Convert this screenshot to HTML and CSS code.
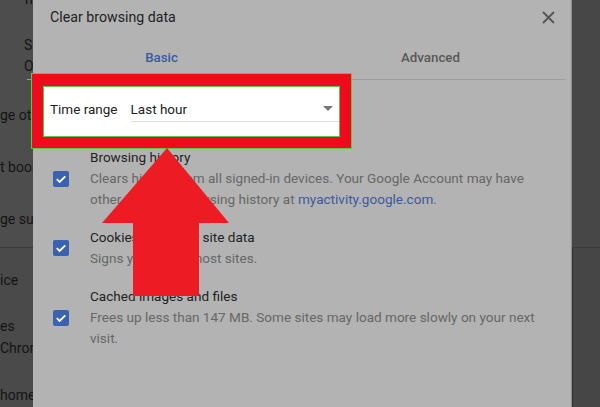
FILE: index.html
```html
<!DOCTYPE html>
<html lang="en">
<head>
<meta charset="utf-8">
<title>Clear browsing data</title>
<link rel="stylesheet" href="styles.css">
</head>
<body>
<div class="screen">
  <div class="bg-left">
    <div class="bg-top">
      <div class="bg-line l-n">n</div>
      <div class="bg-line l-s">S</div>
      <div class="bg-line l-o">O</div>
      <div class="bg-line l-ge">ge other people</div>
      <div class="bg-line l-tb">t bookmarks bar</div>
      <div class="bg-line l-gs">ge supervised users</div>
    </div>
    <div class="bg-bottom">
      <div class="bg-line l-ice">ice</div>
      <div class="bg-line l-es">es</div>
      <div class="bg-line l-chr">Chrome</div>
      <div class="bg-line l-home">home</div>
    </div>
  </div>

  <div class="dialog">
    <div class="dialog-header">
      <div class="dialog-title">Clear browsing data</div>
      <svg class="close" width="13" height="13" viewBox="0 0 13 13" aria-label="Close">
        <path d="M1 1 L12 12 M12 1 L1 12" stroke="#555" stroke-width="1.8" fill="none"/>
      </svg>
    </div>
    <div class="tabs">
      <div class="tab tab-active">Basic</div>
      <div class="tab">Advanced</div>
    </div>

    <div class="highlight">
      <div class="time-row">
        <span class="time-label">Time range</span>
        <div class="select">
          <span>Last hour</span>
          <svg class="caret" width="10" height="5" viewBox="0 0 10 5"><path d="M0 0 L10 0 L5 5 Z" fill="#777"/></svg>
        </div>
      </div>
    </div>

    <div class="items">
      <div class="item">
        <div class="checkbox"><svg width="16" height="16" viewBox="0 0 16 16"><path d="M3.8 8.2 L6.6 11 L12.3 5.3" stroke="#fff" stroke-width="1.8" fill="none"/></svg></div>
        <div class="item-text">
          <div class="item-title">Browsing history</div>
          <div class="item-desc">Clears history from all signed-in devices. Your Google Account may have other forms of browsing history at <span class="link">myactivity.google.com</span>.</div>
        </div>
      </div>
      <div class="item">
        <div class="checkbox"><svg width="16" height="16" viewBox="0 0 16 16"><path d="M3.8 8.2 L6.6 11 L12.3 5.3" stroke="#fff" stroke-width="1.8" fill="none"/></svg></div>
        <div class="item-text">
          <div class="item-title">Cookies and other site data</div>
          <div class="item-desc">Signs you out of most sites.</div>
        </div>
      </div>
      <div class="item">
        <div class="checkbox"><svg width="16" height="16" viewBox="0 0 16 16"><path d="M3.8 8.2 L6.6 11 L12.3 5.3" stroke="#fff" stroke-width="1.8" fill="none"/></svg></div>
        <div class="item-text">
          <div class="item-title">Cached images and files</div>
          <div class="item-desc">Frees up less than 147 MB. Some sites may load more slowly on your next visit.</div>
        </div>
      </div>
    </div>
  </div>

  <div class="bg-right">
    <div class="bg-right-top"></div>
  </div>

  <svg class="arrow" width="600" height="407" viewBox="0 0 600 407">
    <polygon points="167,148 229,223 199,223 199,296 133,296 133,223 102,223" fill="#ed1c24"/>
  </svg>
</div>
</body>
</html>
```

FILE: styles.css
```css
* { box-sizing: border-box; }

html, body {
  margin: 0;
  padding: 0;
  width: 600px;
  height: 407px;
  overflow: hidden;
  background: #464646;
  font-family: Roboto, "Liberation Sans", Arial, sans-serif;
}

.screen {
  position: relative;
  display: flex;
  width: 600px;
  height: 407px;
  overflow: hidden;
}

/* background page, left */
.bg-left {
  width: 33px;
  flex: none;
  overflow: hidden;
  display: flex;
  flex-direction: column;
  background: #4d4d4d;
}
.bg-top {
  height: 248px;
  flex: none;
  border-bottom: 1px solid #3a3a3a;
}
.bg-bottom {
  flex: 1;
  background: #4a4a4a;
}
.bg-line {
  white-space: nowrap;
  font-size: 14px;
  line-height: 16px;
  height: 16px;
  color: #141414;
}
.l-n { margin-top: -9px; padding-left: 25px; }
.l-s { margin-top: 30px; padding-left: 24px; }
.l-o { margin-top: 5px; padding-left: 24px; }
.l-ge { margin-top: 33px; }
.l-tb { margin-top: 36px; }
.l-gs { margin-top: 36px; }
.l-ice { margin-top: 24px; }
.l-es { margin-top: 30px; }
.l-chr { margin-top: 6px; }
.l-home { margin-top: 31px; }

/* dialog */
.dialog {
  width: 539px;
  flex: none;
  background: #b3b3b3;
  border-right: 1px solid #8e8e8e;
  display: flex;
  flex-direction: column;
}

.dialog-header {
  display: flex;
  justify-content: space-between;
  align-items: flex-start;
  height: 40px;
  padding: 7px 16px 0 17px;
}
.dialog-title {
  font-size: 14.2px;
  line-height: 20px;
  color: #1f1f1f;
}
.close {
  margin-top: 4px;
}

.tabs {
  display: flex;
  height: 40px;
  margin: 0 6px 0 -6px;
  padding-top: 8px;
  border-bottom: 1px solid #9c9c9c;
}
.tab {
  flex: 1;
  text-align: center;
  font-size: 13.3px;
  font-weight: 500;
  line-height: 20px;
  color: #585858;
}
.tab-active {
  color: #3c5a9b;
}

/* annotation box */
.highlight {
  width: 321px;
  margin: -7px 0 0 -2px;
  padding: 12px 11px 11px 11px;
  background: #ee0c1c;
  border: 1px solid #5cc64a;
}
.time-row {
  display: flex;
  align-items: flex-start;
  height: 51px;
  padding-top: 10px;
  padding-left: 6px;
  background: #ffffff;
  border: 1px solid #5cc64a;
}
.time-label {
  font-size: 13.5px;
  line-height: 24px;
  color: #222;
}
.select {
  flex: 1;
  display: flex;
  align-items: center;
  justify-content: space-between;
  margin-left: 13px;
  padding-right: 6px;
  height: 25px;
  border-bottom: 1px solid #dedede;
  font-size: 13.5px;
  line-height: 24px;
  color: #222;
}
.caret {
  margin-top: -2px;
}

/* items */
.items {
  display: flex;
  flex-direction: column;
  gap: 17px;
  margin-top: -2px;
}
.item {
  display: flex;
  align-items: center;
  padding-left: 20px;
}
.checkbox {
  width: 16px;
  height: 16px;
  flex: none;
  border-radius: 2px;
  background: #3a62b0;
  margin-right: 21px;
}
.checkbox svg { display: block; }
.item-text {
  width: 458px;
  font-size: 13.55px;
  line-height: 21px;
}
.item-title {
  color: #1f1f1f;
}
.item-desc {
  color: #676767;
}
.link {
  color: #3b5a9c;
}

/* background page, right */
.bg-right {
  flex: 1;
  background: #464646;
  box-shadow: inset 1px 0 0 #333;
}
.bg-right-top {
  height: 248px;
  border-bottom: 1px solid #3a3a3a;
  background: #474747;
}

/* annotation arrow */
.arrow {
  position: absolute;
  left: 0;
  top: 0;
  pointer-events: none;
}
```
